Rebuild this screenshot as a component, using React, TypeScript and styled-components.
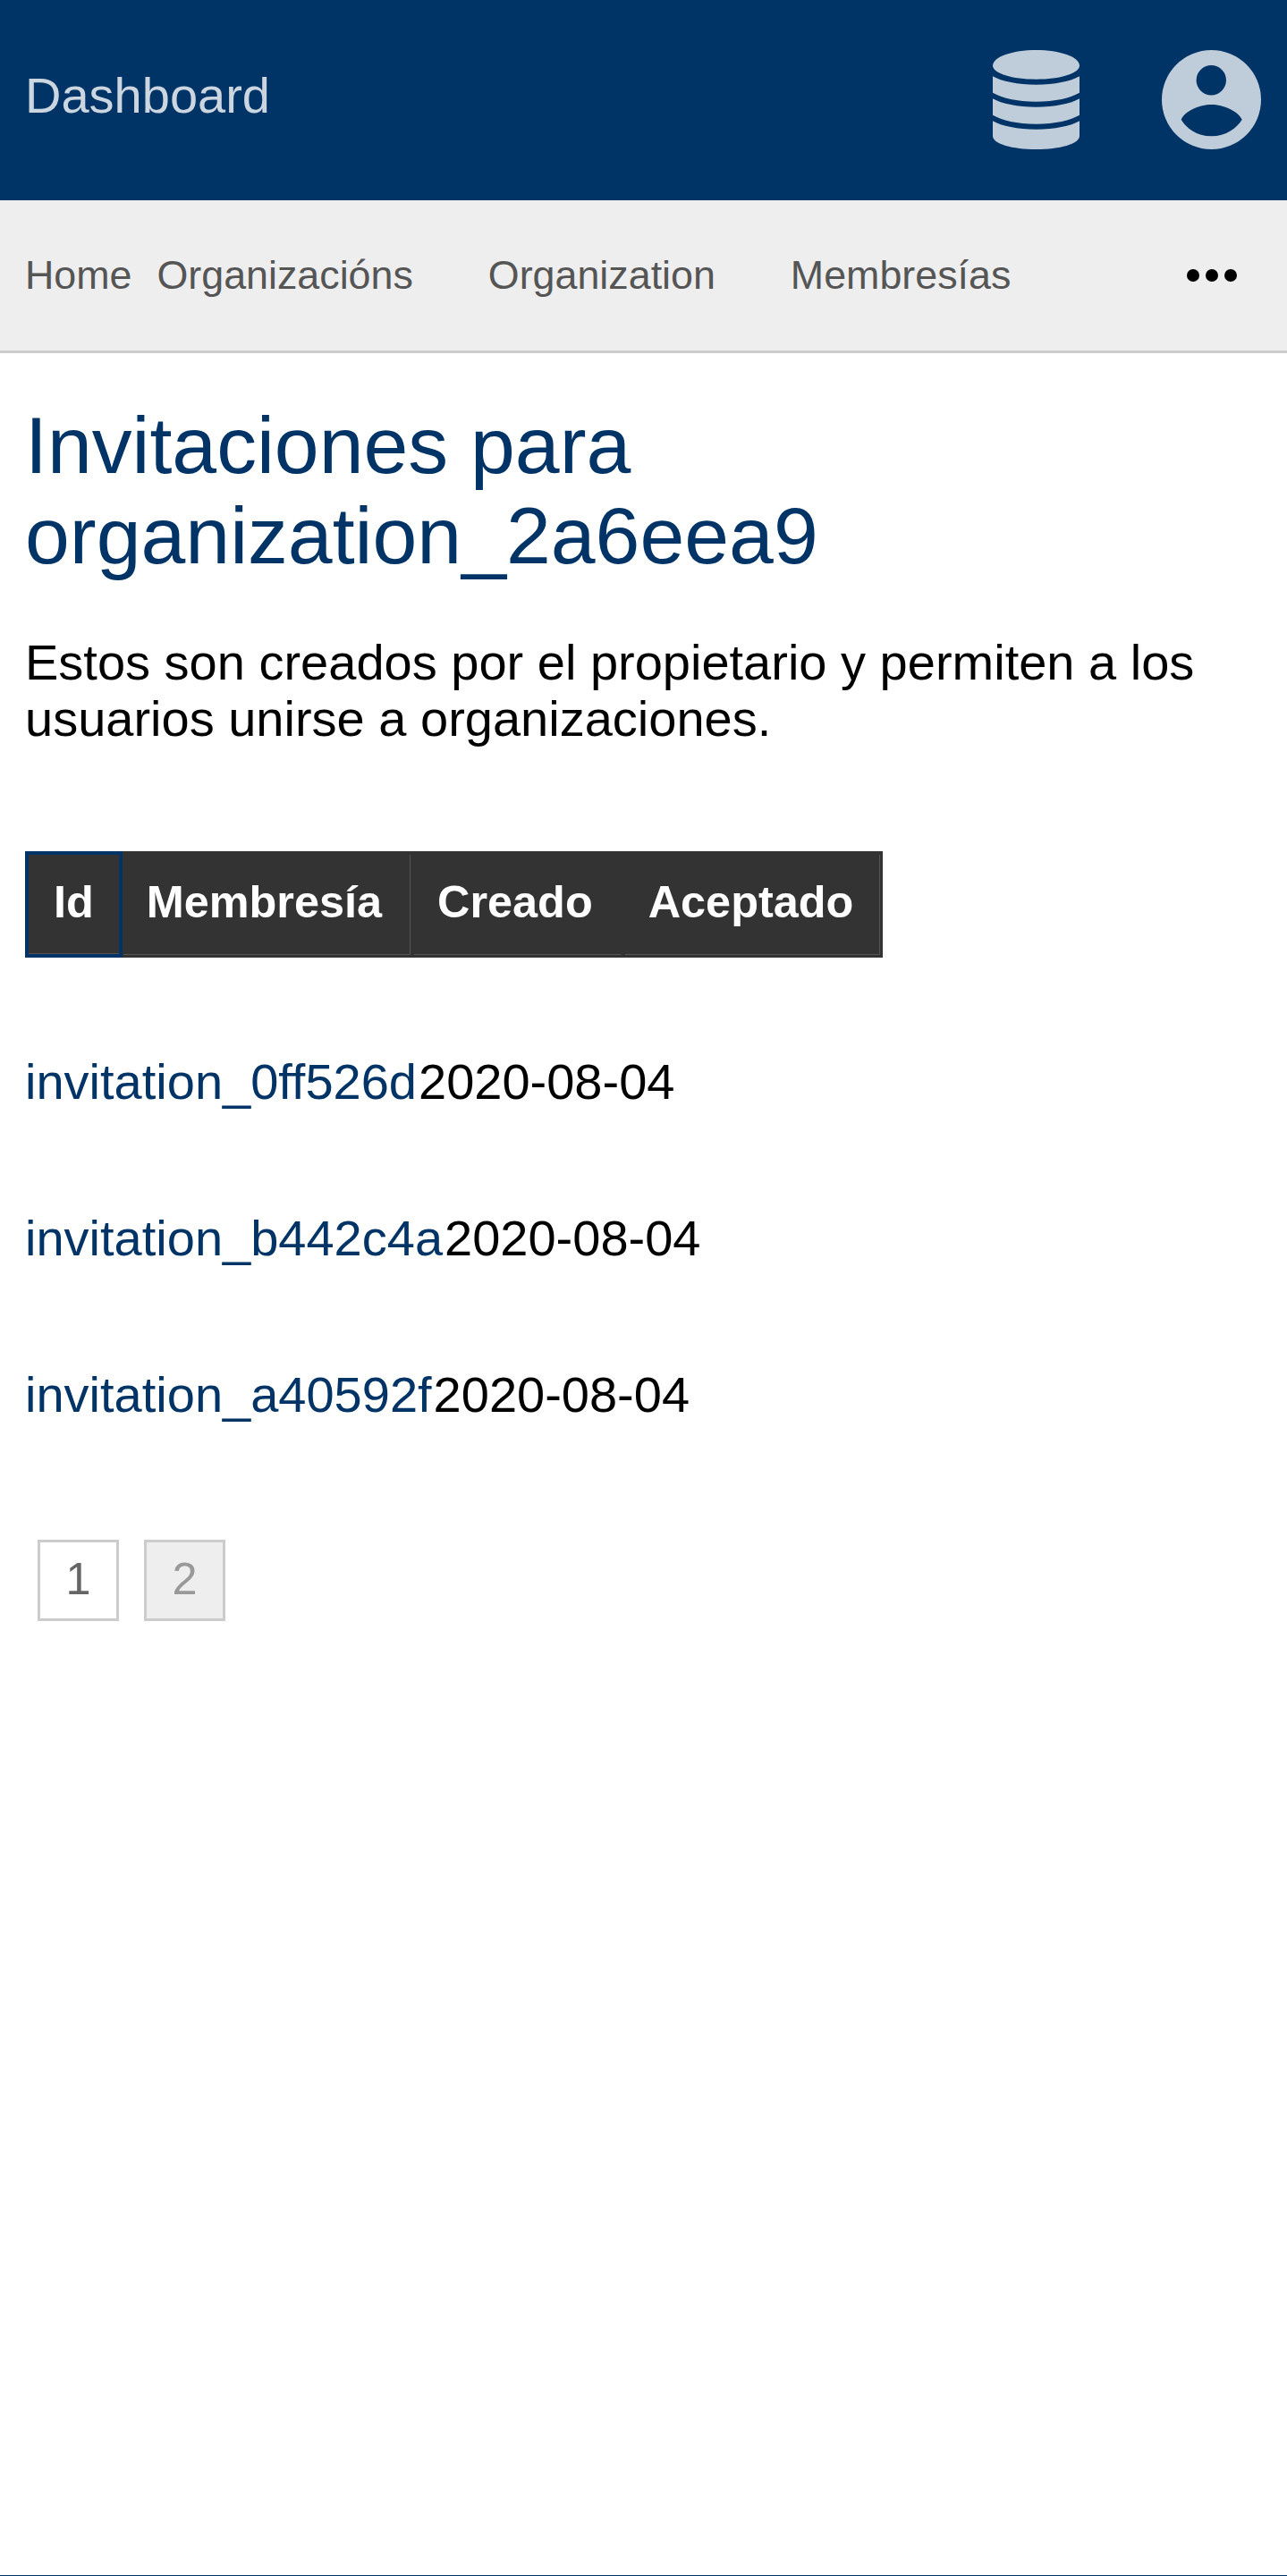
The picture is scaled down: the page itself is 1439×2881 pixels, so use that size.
import { createGlobalStyle, styled } from "styled-components";

const GlobalStyle = createGlobalStyle`
  html, body {
    margin: 0;
    padding: 0;
    background: #fff;
    font-family: "Liberation Sans", Arial, sans-serif;
  }
`;

const invitations = [
  { id: "invitation_0ff526d", created: "2020-08-04" },
  { id: "invitation_b442c4a", created: "2020-08-04" },
  { id: "invitation_a40592f", created: "2020-08-04" },
];

function DatabaseIcon() {
  return (
    <svg width="97" height="111" viewBox="0 0 97 111" fill="#bfccd9">
      <path d="M0 17.5C0 7.5 22 0 48.5 0S97 7.5 97 17.5C97 26 75 32.7 48.5 32.7S0 26 0 17.5Z" />
      <path d="M0 29.3C10 35 28 38.7 48.5 38.7S87 35 97 29.3V47.7C87 53.5 70 57.7 48.5 57.7S10 53.5 0 47.7Z" />
      <path d="M0 54.3C10 60 28 63.7 48.5 63.7S87 60 97 54.3V72.7C87 78.5 70 82.7 48.5 82.7S10 78.5 0 72.7Z" />
      <path d="M0 79.3C10 85 28 88.7 48.5 88.7S87 85 97 79.3V96C97 105 75 111 48.5 111S0 105 0 96Z" />
    </svg>
  );
}

function UserIcon() {
  return (
    <svg width="111" height="111" viewBox="0 0 111 111">
      <path
        fill="#bfccd9"
        fillRule="evenodd"
        d="M55.5 0a55.5 55.5 0 1 0 0 111a55.5 55.5 0 1 0 0-111Z
           M55.3 17a16.7 16.7 0 1 1 0 33.4a16.7 16.7 0 1 1 0-33.4Z
           M21.7 77.7C26 68 42 61 55.5 61C69 61 85 68 89.7 77.7C84 87 72 96.3 55.5 96.3C39 96.3 27 87 21.7 77.7Z"
      />
    </svg>
  );
}

function DotsIcon() {
  return (
    <svg width="56" height="14" viewBox="0 0 56 14" fill="#000">
      <circle cx="7" cy="7" r="7" />
      <circle cx="28" cy="7" r="7" />
      <circle cx="49" cy="7" r="7" />
    </svg>
  );
}

export default function App() {
  return (
    <Page>
      <GlobalStyle />
      <Header>
        <Brand>Dashboard</Brand>
        <HeaderIcons>
          <DatabaseIcon />
          <UserIcon />
        </HeaderIcons>
      </Header>
      <Nav>
        <NavItem $gap={28}>Home</NavItem>
        <NavItem $gap={84}>Organizacións</NavItem>
        <NavItem $gap={84}>Organization</NavItem>
        <NavItem $gap={0}>Membresías</NavItem>
        <More>
          <DotsIcon />
        </More>
      </Nav>
      <Main>
        <Title>Invitaciones para organization_2a6eea9</Title>
        <Intro>
          Estos son creados por el propietario y permiten a los usuarios unirse
          a organizaciones.
        </Intro>
        <TableHead>
          <SortedCell>Id</SortedCell>
          <HeadCell>Membresía</HeadCell>
          <HeadCell $noEdge>Creado</HeadCell>
          <HeadCell $last>Aceptado</HeadCell>
        </TableHead>
        <Rows>
          {invitations.map((row) => (
            <Row key={row.id}>
              <RowLink href="#">{row.id}</RowLink>
              <RowDate>{row.created}</RowDate>
            </Row>
          ))}
        </Rows>
        <Pager>
          <PageButton>1</PageButton>
          <PageButton $current>2</PageButton>
        </Pager>
      </Main>
      <Footer />
    </Page>
  );
}

const Page = styled.div`
  display: flex;
  flex-direction: column;
  min-height: 2881px;
`;

const Header = styled.header`
  display: flex;
  align-items: flex-start;
  justify-content: space-between;
  box-sizing: border-box;
  height: 224px;
  padding: 56px 29px 0 28px;
  background: #003366;
`;

const Brand = styled.div`
  font-size: 56px;
  line-height: 101px;
  color: #ccd6e0;
`;

const HeaderIcons = styled.div`
  display: flex;
  gap: 92px;
`;

const Nav = styled.nav`
  display: flex;
  align-items: center;
  box-sizing: border-box;
  height: 171px;
  padding: 0 56px 0 28px;
  background: #eeeeee;
  border-bottom: 3px solid #cccccc;
`;

const NavItem = styled.a<{ $gap: number }>`
  font-size: 44.8px;
  color: #555555;
  margin-right: ${(p) => p.$gap}px;
  margin-top: -2px;
`;

const More = styled.div`
  display: flex;
  margin-left: auto;
`;

const Main = styled.main`
  padding: 0 28px;
`;

const Title = styled.h1`
  margin: 53px 0 0;
  font-size: 89.6px;
  font-weight: 400;
  line-height: 101px;
  color: #003366;
`;

const Intro = styled.p`
  margin: 59px 0 0;
  font-size: 56px;
  line-height: 63px;
  color: #000;
`;

const TableHead = styled.div`
  display: flex;
  width: fit-content;
  gap: 4px;
  box-sizing: border-box;
  height: 119px;
  margin-top: 117px;
  padding: 4px 3px 3px 0;
  background: #333333;
`;

const HeadCell = styled.div<{ $noEdge?: boolean; $last?: boolean }>`
  box-sizing: border-box;
  padding: 0 ${(p) => (p.$last ? 29 : 31)}px 0 26px;
  font-size: 50.4px;
  font-weight: 700;
  line-height: 105px;
  color: #fff;
  border-bottom: 1px solid #555555;
  border-right: 1px solid ${(p) => (p.$noEdge ? "#333333" : "#555555")};
`;

const SortedCell = styled.div`
  box-sizing: border-box;
  margin: -4px -3px -3px 0;
  padding: 0 28px;
  font-size: 50.4px;
  font-weight: 700;
  line-height: 105px;
  color: #fff;
  border: 4px solid #003366;
  box-shadow: inset 0 -1px 0 #555555;
`;

const Rows = styled.div`
  margin-top: 108px;
`;

const Row = styled.div`
  height: 175px;
  font-size: 56px;
  line-height: 62px;
  color: #000;
`;

const RowLink = styled.a`
  color: #003366;
  text-decoration: none;
`;

const RowDate = styled.span`
  margin-left: 2px;
`;

const Pager = styled.div`
  display: flex;
  gap: 28px;
  margin: 18px 0 0 14px;
`;

const PageButton = styled.div<{ $current?: boolean }>`
  display: flex;
  align-items: center;
  justify-content: center;
  box-sizing: border-box;
  width: 91px;
  height: 91px;
  padding-bottom: 4px;
  font-size: 50.4px;
  border: 3px solid #cccccc;
  background: ${(p) => (p.$current ? "#eeeeee" : "#ffffff")};
  color: ${(p) => (p.$current ? "#999999" : "#666666")};
`;

const Footer = styled.footer`
  margin-top: auto;
  height: 1px;
  background: #003366;
`;
